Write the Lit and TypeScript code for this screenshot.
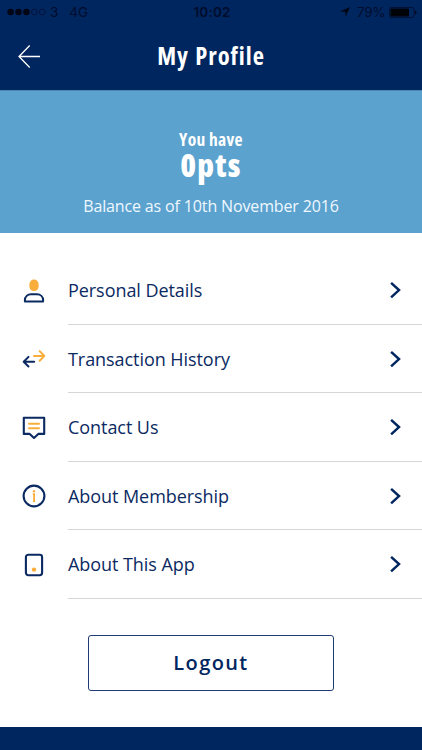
import { LitElement, html, css, svg } from "lit";
import { customElement, property } from "lit/decorators.js";

const NAVY = "#0b2a62";
const AMBER = "#f9ad3a";

const icons: Record<string, unknown> = {
  person: svg`<rect x="7.4" y="0.6" width="9.2" height="11.4" rx="4.4" fill=${AMBER}/>
    <path d="M2.9 22.4V21.2C2.9 17.6 5.6 15.2 9 15.2H15C18.4 15.2 21.1 17.6 21.1 21.2V22.4Z" fill="none" stroke=${NAVY} stroke-width="2" stroke-linejoin="round"/>`,
  transfer: svg`<path d="M12 8.9H22.2M17.7 4.1L22.4 8.9L17.7 13.7" fill="none" stroke=${AMBER} stroke-width="2" stroke-linecap="round" stroke-linejoin="round"/>
    <path d="M12.2 14.7H1.8M6.5 9.9L1.7 14.7L6.5 19.5" fill="none" stroke=${NAVY} stroke-width="2" stroke-linecap="round" stroke-linejoin="round"/>`,
  message: svg`<path d="M1.8 1.7H22.2V17.9H16.3L12 21.9L7.7 17.9H1.8Z" fill="none" stroke=${NAVY} stroke-width="2.1" stroke-linejoin="round"/>
    <path d="M7 7.8H17M7 12.2H17" stroke=${AMBER} stroke-width="2" stroke-linecap="round"/>`,
  info: svg`<circle cx="12" cy="12" r="10.4" fill="none" stroke=${NAVY} stroke-width="2.1"/>
    <path d="M10.8 10.2H12.1V17.2M11 17.2H13.1" fill="none" stroke=${AMBER} stroke-width="1.8"/><circle cx="12" cy="7.3" r="1.2" fill=${AMBER}/>`,
  phone: svg`<rect x="3.9" y="1.8" width="16.2" height="20.4" rx="2.4" fill="none" stroke=${NAVY} stroke-width="2.1"/>
    <circle cx="12" cy="16.6" r="2.2" fill=${AMBER}/>`,
};

@customElement("status-bar")
export class StatusBar extends LitElement {
  static styles = css`
    :host {
      display: grid;
      grid-template-columns: 1fr auto 1fr;
      align-items: center;
      height: 24px;
      padding: 0 5px 0 7px;
      color: #000c2c;
      font: 13.5px/24px Inter, "Liberation Sans", sans-serif;
    }
    .side { display: flex; align-items: center; }
    .right { justify-content: flex-end; }
    .carrier { margin-left: 4px; }
    .network { margin-left: 11px; }
    .time { font-weight: 600; letter-spacing: 0.2px; }
    .level { margin: 0 4px 0 7px; letter-spacing: -0.4px; }
    svg { display: block; }
  `;
  render() {
    return html`
      <div class="side">
        <svg width="39" height="8" viewBox="0 0 39 8">
          ${[0, 1, 2, 3, 4].map((i) => svg`<circle cx=${3.6 + i * 7.9} cy="4" r=${i < 3 ? 3.3 : 2.9}
            fill=${i < 3 ? "#000616" : "none"} stroke=${i < 3 ? "none" : "#000c2c"} stroke-width="0.7"/>`)}
        </svg>
        <span class="carrier">3</span><span class="network">4G</span>
      </div>
      <span class="time">10:02</span>
      <div class="side right">
        <svg width="10" height="10" viewBox="0 0 10 10"><path d="M10 0L5.6 9.8L5.2 4.8L0 4.4Z" fill="#000616"/></svg>
        <span class="level">79%</span>
        <svg width="28" height="11" viewBox="0 0 28 11">
          <rect x="0.5" y="0.5" width="24.5" height="10" rx="1.8" fill="none" stroke="#000c2c" stroke-width="0.8"/>
          <rect x="1.5" y="1.5" width="18.5" height="8" rx="0.8" fill="#000308"/>
          <path d="M26 3.6Q27.6 4.4 27.6 5.5T26 7.4Z" fill="#000616"/>
        </svg>
      </div>
    `;
  }
}

@customElement("menu-row")
export class MenuRow extends LitElement {
  @property() icon = "";
  @property() label = "";
  static styles = css`
    :host {
      display: flex;
      align-items: stretch;
      height: 68.55px;
      color: #0b2a62;
      font: 18px/24px "Open Sans", "Noto Sans", sans-serif;
      letter-spacing: -0.06px;
    }
    .icon { width: 68px; display: flex; align-items: center; padding: 0.6px 0 0 22px; box-sizing: border-box; }
    .body {
      flex: 1;
      display: flex;
      align-items: center;
      justify-content: space-between;
      padding: 0.6px 20px 0 0;
      border-bottom: 1px solid #d6d6d8;
    }
    svg { display: block; }
  `;
  render() {
    return html`
      <div class="icon"><svg width="24" height="24" viewBox="0 0 24 24">${icons[this.icon]}</svg></div>
      <div class="body">
        <span>${this.label}</span>
        <svg width="13" height="18" viewBox="0 0 13 18">
          <path d="M2.1 1.9L10 9.1L2.1 16.3" fill="none" stroke="#00265f" stroke-width="2.5"/>
        </svg>
      </div>
    `;
  }
}

@customElement("app-root")
export class AppRoot extends LitElement {
  static styles = css`
    :host {
      display: flex;
      flex-direction: column;
      height: 750px;
      background: #fff;
      color: #00265f;
      font-family: "Open Sans", "Noto Sans", sans-serif;
      overflow: hidden;
    }
    .header { height: 90px; background: #00265f; flex: none; }
    .nav { display: grid; grid-template-columns: 54px 1fr 54px; align-items: center; height: 64px; }
    .back { display: block; margin: 0 0 0 18px; }
    .title, .have, .points { font-stretch: 75%; font-weight: 800; color: #fff; text-align: center; }
    .title { font-size: 24.5px; line-height: 32px; font-weight: 740; letter-spacing: 0.95px; word-spacing: 1px; margin: 0; }
    .balance {
      height: 143px;
      flex: none;
      box-sizing: border-box;
      padding-top: 37px;
      background: #5ba2ce;
      color: #f0f8ff;
      text-align: center;
      border-top: 1px solid #4b86b4;
    }
    .have { font-size: 17.5px; line-height: 22px; font-weight: 700; letter-spacing: 0.3px; }
    .points { font-size: 32px; line-height: 32px; letter-spacing: 1.2px; margin-top: -1px; }
    .date { font-size: 16px; line-height: 22px; margin-top: 14px; letter-spacing: -0.14px; }
    .menu { padding-top: 23px; flex: 1; }
    .logout {
      display: block;
      flex: none;
      width: 246px;
      height: 56px;
      margin: 0 auto 36px;
      border: 1px solid #1f3c74;
      border-radius: 3px;
      background: #fff;
      color: #00265f;
      font: 600 20px/28px "Open Sans", "Noto Sans", sans-serif;
      letter-spacing: 1.4px;
    }
    .footer { height: 23px; background: #00265f; flex: none; }
  `;
  render() {
    return html`
      <header class="header">
        <status-bar></status-bar>
        <div class="nav">
          <svg class="back" width="24" height="24" viewBox="0 0 24 24">
            <path d="M22 12.5H1.5M11.7 1.5L1 12.5L11.7 23.5" fill="none" stroke="#fff" stroke-width="1.3"/>
          </svg>
          <h1 class="title">My Profile</h1>
        </div>
      </header>
      <section class="balance">
        <div class="have">You have</div>
        <div class="points">0pts</div>
        <div class="date">Balance as of 10th November 2016</div>
      </section>
      <nav class="menu">
        <menu-row icon="person" label="Personal Details"></menu-row>
        <menu-row icon="transfer" label="Transaction History"></menu-row>
        <menu-row icon="message" label="Contact Us"></menu-row>
        <menu-row icon="info" label="About Membership"></menu-row>
        <menu-row icon="phone" label="About This App"></menu-row>
      </nav>
      <button class="logout">Logout</button>
      <footer class="footer"></footer>
    `;
  }
}
